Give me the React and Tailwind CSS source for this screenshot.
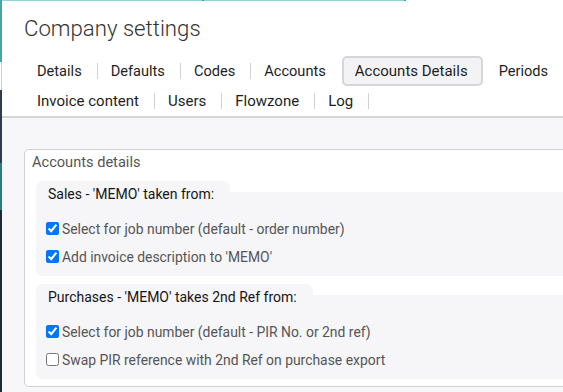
import React from "react";

const row1 = ["Details", "Defaults", "Codes", "Accounts", "Accounts Details", "Periods"];
const row2 = ["Invoice content", "Users", "Flowzone", "Log"];
const ACTIVE = "Accounts Details";

function TabRow({ items, trailing, size }) {
  const out = [];
  items.forEach((t, i) => {
    const active = t === ACTIVE;
    const nextActive = items[i + 1] === ACTIVE;
    out.push(
      <div
        key={t}
        className={
          active
            ? "h-[30px] pl-[11px] pr-[13px] border-2 border-[#d6d6da] bg-[#f3f3f5] rounded-[5px] flex items-center text-[15px] leading-5 text-[#1e1e1e] whitespace-nowrap"
            : "h-[30px] px-3 border border-transparent flex items-center leading-5 text-[#1e1e1e] whitespace-nowrap " +
              size
        }
      >
        {t}
      </div>
    );
    const isLast = i === items.length - 1;
    if (!isLast || trailing) {
      const hidden = active || nextActive;
      out.push(
        <div
          key={t + "-sep"}
          className={
            hidden
              ? "w-px h-4 ml-[2px] bg-transparent shrink-0"
              : "w-px h-4 ml-[2px] bg-[#d2d2d2] shrink-0"
          }
        />
      );
    }
  });
  return <div className="flex items-center h-[30px]">{out}</div>;
}

function Check({ checked, label }) {
  return (
    <label className="flex items-center h-[28px] pl-[10px] gap-[3px]">
      <input
        type="checkbox"
        defaultChecked={checked}
        className="m-0 w-[13px] h-[13px] shrink-0"
      />
      <span className="text-[13.9px] leading-5 text-[#555] whitespace-nowrap">{label}</span>
    </label>
  );
}

function Section({ title, items, className }) {
  return (
    <div className={className}>
      <div className="h-[11px] w-fit rounded-t-[7px] bg-[#f6f6f8] pl-3 pr-4 pt-[2.5px]">
        <div className="text-[14px] leading-5 text-[#151515] whitespace-nowrap">{title}</div>
      </div>
      <div className="bg-[#f6f6f8] rounded-b-[7px] pt-[22.5px] pb-[5.5px]">
        {items.map((it) => (
          <Check key={it.label} checked={it.checked} label={it.label} />
        ))}
      </div>
    </div>
  );
}

export default function App() {
  return (
    <div className="w-[563px] h-[392px] overflow-hidden flex font-['Roboto',sans-serif] bg-white">
      <div className="w-[2px] shrink-0 flex flex-col">
        <div className="h-[62px] bg-[#4aa3a8]" />
        <div className="h-[28px] border-r border-[#cfcfcf] bg-white" />
        <div className="h-[73px] bg-[#2e3c4f]" />
        <div className="h-[47px] bg-[#2b7c87]" />
        <div className="flex-1 bg-[#1f2a37]" />
      </div>
      <div className="flex-1 min-w-0 flex flex-col overflow-hidden">
        <div className="flex h-px shrink-0">
          <div className="w-[200px] bg-[#93d2d5]" />
          <div className="w-[2px] bg-[#3a9ea5]" />
          <div className="w-[200px] bg-[#93d2d5]" />
          <div className="w-[2px] bg-[#3a9ea5]" />
        </div>
        <div className="bg-white border-b-2 border-[#d6d6d6] shrink-0">
          <div className="pl-[22px] pt-[13px] pb-[14px] text-[22.2px] leading-[28px] font-light text-[#333]">
            Company settings
          </div>
          <div className="pl-[22px]">
            <TabRow items={row1} trailing size="text-[14.6px]" />
            <TabRow items={row2} trailing size="text-[15px]" />
          </div>
        </div>
        <div className="flex-1 bg-[#f7f7f9] pt-[31px] pl-[22px]">
          <div className="w-[700px] border border-[#d0d0d0] rounded-[5px] bg-white pt-[2px] pb-[7px]">
            <div className="pl-[7px] text-[14.6px] leading-5 text-[#555]">Accounts details</div>
            <div className="pl-[11px] mt-[9px]">
              <Section
                title="Sales - 'MEMO' taken from:"
                items={[
                  { checked: true, label: "Select for job number (default - order number)" },
                  { checked: true, label: "Add invoice description to 'MEMO'" },
                ]}
              />
              <Section
                className="mt-2"
                title="Purchases - 'MEMO' takes 2nd Ref from:"
                items={[
                  { checked: true, label: "Select for job number (default - PIR No. or 2nd ref)" },
                  { checked: false, label: "Swap PIR reference with 2nd Ref on purchase export" },
                ]}
              />
            </div>
          </div>
        </div>
      </div>
    </div>
  );
}
